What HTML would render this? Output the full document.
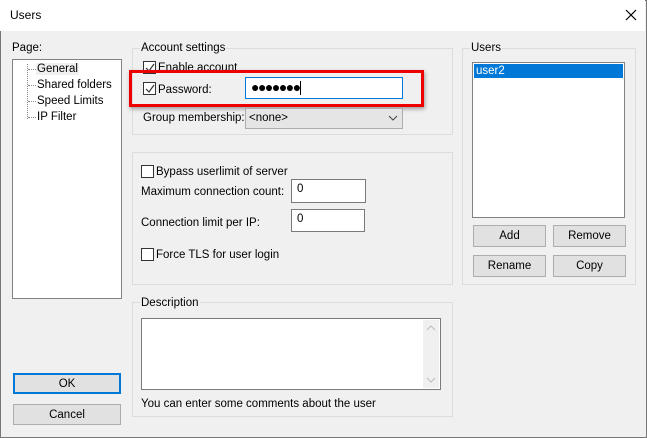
<!DOCTYPE html>
<html><head><style>
*{box-sizing:border-box;margin:0;padding:0}
body{width:647px;height:438px;overflow:hidden;background:#f0f0f0;font-family:"Liberation Sans",sans-serif;font-size:11.5px;color:#000;position:relative}
.a{position:absolute;white-space:nowrap}
.win{position:absolute;left:0;top:0;width:647px;height:438px;border:1px solid #777}
.title{position:absolute;left:0;top:0;width:645px;height:31px;background:#fff}
.grp{position:absolute;border:1px solid #dcdcdc}
.lbl{position:absolute;background:#f0f0f0;padding:0 1px;line-height:13px}
.cb{position:absolute;width:13px;height:13px;border:1px solid #333;background:#fff}
.inp{position:absolute;background:#fff;border:1px solid #7a7a7a}
.btn{position:absolute;background:#e1e1e1;border:1px solid #adadad;text-align:center;line-height:19px}
</style></head><body>
<div class="win"></div>
<div class="title"></div>
<div class="a" style="left:10px;top:8px;font-size:12px">Users</div>
<svg class="a" style="left:625px;top:9px" width="12" height="12"><path d="M1 1L11 11M11 1L1 11" stroke="#000" stroke-width="1.2"/></svg>

<div class="a" style="left:12px;top:42px">Page:</div>
<div class="a" style="left:12px;top:59px;width:110px;height:240px;background:#fff;border:1px solid #828282"></div>
<div class="a" style="left:27px;top:64px;height:55px;border-left:1px dotted #888"></div>
<div class="a" style="left:28px;top:69px;width:8px;border-top:1px dotted #888"></div>
<div class="a" style="left:28px;top:85px;width:8px;border-top:1px dotted #888"></div>
<div class="a" style="left:28px;top:101px;width:8px;border-top:1px dotted #888"></div>
<div class="a" style="left:28px;top:117px;width:8px;border-top:1px dotted #888"></div>
<div class="a" style="left:36px;top:63px;background:#f0f0f0;padding:0 1px">General</div>
<div class="a" style="left:37px;top:79px">Shared folders</div>
<div class="a" style="left:37px;top:95px">Speed Limits</div>
<div class="a" style="left:37px;top:111px">IP Filter</div>

<div class="grp" style="left:132px;top:48px;width:321px;height:87px"></div>
<div class="lbl" style="left:140px;top:42px">Account settings</div>
<div class="cb" style="left:143px;top:61px"></div>
<svg class="a" style="left:144px;top:62px" width="12" height="12"><path d="M2 6L5 9L10 2" stroke="#333" fill="none" stroke-width="1.2"/></svg>
<div class="a" style="left:158px;top:62px">Enable account</div>
<div class="cb" style="left:143px;top:82px"></div>
<svg class="a" style="left:144px;top:83px" width="12" height="12"><path d="M2 6L5 9L10 2" stroke="#333" fill="none" stroke-width="1.2"/></svg>
<div class="a" style="left:158px;top:84px">Password:</div>
<div class="inp" style="left:245px;top:77px;width:158px;height:22px;border-color:#0078d7"></div>
<div class="a" style="left:251px;top:79px;font-size:14px;letter-spacing:-1.5px">●●●●●●●</div>
<div class="a" style="left:300px;top:81px;height:14px;border-left:1px solid #000"></div>
<div class="a" style="left:129px;top:70px;width:295px;height:37px;border:3px solid #e00;box-shadow:1px 2px 4px rgba(0,0,0,.35)"></div>
<div class="a" style="left:143px;top:112px">Group membership:</div>
<div class="a" style="left:245px;top:108px;width:158px;height:21px;background:#e5e5e5;border:1px solid #adadad"></div>
<div class="a" style="left:249px;top:112px">&lt;none&gt;</div>
<svg class="a" style="left:388px;top:115px" width="10" height="6"><path d="M1 1L5 5L9 1" stroke="#444" fill="none"/></svg>

<div class="grp" style="left:132px;top:152px;width:321px;height:133px"></div>
<div class="cb" style="left:141px;top:165px"></div>
<div class="a" style="left:156px;top:166px">Bypass userlimit of server</div>
<div class="a" style="left:141px;top:186px">Maximum connection count:</div>
<div class="inp" style="left:291px;top:179px;width:75px;height:24px"></div>
<div class="a" style="left:297px;top:183px">0</div>
<div class="a" style="left:141px;top:217px">Connection limit per IP:</div>
<div class="inp" style="left:291px;top:209px;width:74px;height:23px"></div>
<div class="a" style="left:297px;top:213px">0</div>
<div class="cb" style="left:141px;top:248px"></div>
<div class="a" style="left:156px;top:249px">Force TLS for user login</div>

<div class="grp" style="left:132px;top:302px;width:321px;height:115px"></div>
<div class="lbl" style="left:140px;top:297px">Description</div>
<div class="inp" style="left:141px;top:318px;width:300px;height:72px"></div>
<div class="a" style="left:423px;top:320px;width:16px;height:68px;background:#f0f0f0"></div>
<svg class="a" style="left:426px;top:325px" width="10" height="6"><path d="M1 5L5 1L9 5" stroke="#bbb" fill="none"/></svg>
<svg class="a" style="left:426px;top:377px" width="10" height="6"><path d="M1 1L5 5L9 1" stroke="#bbb" fill="none"/></svg>
<div class="a" style="left:141px;top:398px">You can enter some comments about the user</div>

<div class="btn" style="left:13px;top:373px;width:108px;height:21px;border:2px solid #0078d7;line-height:18px">OK</div>
<div class="btn" style="left:13px;top:404px;width:108px;height:21px;line-height:20px">Cancel</div>

<div class="grp" style="left:462px;top:48px;width:174px;height:237px"></div>
<div class="lbl" style="left:470px;top:42px">Users</div>
<div class="a" style="left:472px;top:62px;width:153px;height:156px;background:#fff;border:1px solid #828282"></div>
<div class="a" style="left:474px;top:64px;width:149px;height:14px;background:#0078d7;color:#fff;line-height:14px;padding-left:2px">user2</div>
<div class="btn" style="left:473px;top:225px;width:73px;height:22px;line-height:21px">Add</div>
<div class="btn" style="left:553px;top:225px;width:73px;height:22px;line-height:21px">Remove</div>
<div class="btn" style="left:473px;top:255px;width:73px;height:22px;line-height:21px">Rename</div>
<div class="btn" style="left:553px;top:255px;width:73px;height:22px;line-height:21px">Copy</div>
</body></html>
